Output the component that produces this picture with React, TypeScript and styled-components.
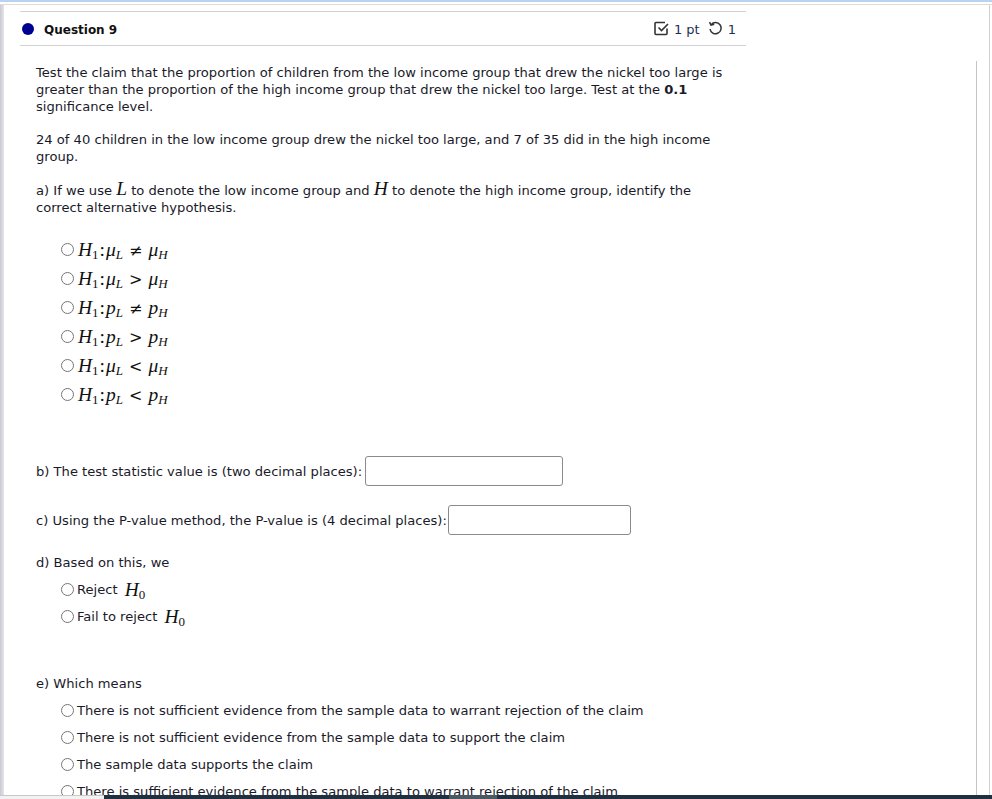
import React, { FC } from "react";
import styled, { createGlobalStyle } from "styled-components";

const GlobalStyle = createGlobalStyle`
  html, body {
    margin: 0;
    padding: 0;
    height: 100%;
    overflow: hidden;
    background: #fff;
  }
`;

const Page = styled.div`
  position: relative;
  width: 992px;
  height: 799px;
  overflow: hidden;
  font-family: "DejaVu Sans", Verdana, sans-serif;
  font-size: 13.1px;
  color: #1a1a2a;
  background: #fff;
  display: flex;
  flex-direction: column;
`;

const TopBar = styled.div`
  height: 2px;
  flex: none;
  background: #fff;
  border-top: 2px solid #b8d4f0;
  border-bottom: 1px solid #dcdcdc;
`;

const Frame = styled.div`
  flex: 1;
  display: flex;
  min-height: 0;
`;

const LeftEdge = styled.div`
  width: 4px;
  flex: none;
  background: linear-gradient(to right, #c9c9d2, #e4e4e8);
`;

const RightEdge = styled.div`
  width: 1px;
  flex: none;
  margin-left: auto;
  margin-right: 2px;
  background: #d0d0d0;
`;

const Column = styled.div`
  width: 726px;
  flex: none;
  margin-left: 16px;
  padding-top: 6px;
`;

const Header = styled.div`
  display: flex;
  align-items: center;
  height: 33px;
  border-top: 1px solid #d2d2d2;
  border-bottom: 1px solid #d2d2d2;
`;

const Dot = styled.span`
  width: 12px;
  height: 12px;
  border-radius: 50%;
  background: #000090;
  margin-left: 2px;
  margin-right: 10px;
`;

const QuestionTitle = styled.span`
  font-weight: bold;
  font-size: 12px;
  color: #111;
  padding-top: 2px;
`;

const Points = styled.div`
  margin-left: auto;
  display: flex;
  align-items: center;
  color: #1f2f50;
  font-size: 13px;
  padding-right: 10px;
`;

const PointText = styled.span<{ $gap: number }>`
  margin-left: 5px;
  margin-right: ${({ $gap }) => $gap}px;
  padding-top: 2px;
`;

const Body = styled.div`
  padding: 18px 0 0 16px;
  line-height: 17px;
`;

const Paragraph = styled.p<{ $bottom: number }>`
  margin: 0 0 ${({ $bottom }) => $bottom}px;
  width: 700px;
`;

const OptionList = styled.div<{ $top: number; $bottom: number }>`
  display: flex;
  flex-direction: column;
  margin: ${({ $top }) => $top}px 0 ${({ $bottom }) => $bottom}px 25px;
`;

const Option = styled.div`
  height: 29px;
  display: flex;
  align-items: center;
`;

const OptionTight = styled(Option)`
  height: 27px;
`;

const Radio = styled.span`
  width: 13px;
  height: 13px;
  box-sizing: border-box;
  flex: none;
  border: 1px solid #767676;
  border-radius: 50%;
  margin-right: 3px;
  background: #fff;
`;

const HypothesisGap = styled.span`
  width: 1px;
  flex: none;
`;

const Math = styled.span`
  font-family: "Liberation Serif", "Times New Roman", serif;
  font-size: 19.5px;
  font-style: italic;
  color: #111;
  white-space: pre;
`;

const InlineMath = styled(Math)`
  line-height: 0;
`;

const AfterWord = styled(Math)`
  margin-left: 3px;
`;

const Sub = styled.sub`
  font-size: 13px;
  line-height: 0;
  vertical-align: -3px;
`;

const Upright = styled.span`
  font-style: normal;
`;

const Colon = styled(Upright)`
  margin: 0 1px;
`;

const Relation = styled.span`
  font-family: "DejaVu Serif", serif;
  font-style: normal;
  font-size: 16px;
  margin: 0 6px;
`;

const AnswerRow = styled.div<{ $bottom: number; $gap: number }>`
  display: flex;
  align-items: center;
  gap: ${({ $gap }) => $gap}px;
  height: 30px;
  margin-bottom: ${({ $bottom }) => $bottom}px;
`;

const AnswerInput = styled.input<{ $width: number }>`
  width: ${({ $width }) => $width}px;
  height: 30px;
  box-sizing: border-box;
  border: 1px solid #8a8a8a;
  border-radius: 3px;
  background: #fff;
  padding: 0 4px;
`;

const Label = styled.div`
  height: 17px;
`;

const ScrollTrack = styled.div`
  position: absolute;
  left: 104px;
  right: 0;
  bottom: 0;
  height: 4px;
  background: #1f3040;
`;

const ScrollThumb = styled.div`
  position: absolute;
  left: 345px;
  top: 0;
  width: 48px;
  height: 4px;
  background: #4a5a62;
`;

const ScrollLeft = styled.div`
  position: absolute;
  left: 0;
  width: 104px;
  bottom: 0;
  height: 3px;
  background: #f2f2f2;
  border-top: 1px solid #c8c8c8;
`;

const Divider = styled.div`
  position: absolute;
  left: 976px;
  top: 61px;
  bottom: 0;
  width: 1px;
  background: #c4c4c4;
`;

const Hyp: FC<{ a: string; rel: string }> = ({ a, rel }) => (
  <Math>
    H<Sub><Upright>1</Upright></Sub><Colon>:</Colon>
    {a}<Sub>L</Sub>
    <Relation>{rel}</Relation>
    {a}<Sub>H</Sub>
  </Math>
);

const hypotheses: { a: string; rel: string }[] = [
  { a: "μ", rel: "≠" },
  { a: "μ", rel: ">" },
  { a: "p", rel: "≠" },
  { a: "p", rel: ">" },
  { a: "μ", rel: "<" },
  { a: "p", rel: "<" },
];

const conclusions = [
  "There is not sufficient evidence from the sample data to warrant rejection of the claim",
  "There is not sufficient evidence from the sample data to support the claim",
  "The sample data supports the claim",
  "There is sufficient evidence from the sample data to warrant rejection of the claim",
];

const CheckIcon = () => (
  <svg width="15" height="15" viewBox="0 0 15 15" fill="none" stroke="#333" strokeWidth="1.6">
    <path d="M13 7.5v5a1 1 0 0 1-1 1H2a1 1 0 0 1-1-1V2.5a1 1 0 0 1 1-1h9" />
    <path d="M4.5 6.5 7.5 9.5 14 3" />
  </svg>
);

const RetryIcon = () => (
  <svg width="15" height="15" viewBox="0 0 15 15" fill="none" stroke="#333" strokeWidth="1.5">
    <path d="M3.2 3.6A5.6 5.6 0 1 1 2 8" />
    <path d="M1.5 1.2 3 4.2 6.2 3.2" />
  </svg>
);

const App: FC = () => (
  <Page>
    <GlobalStyle />
    <TopBar />
    <Frame>
      <LeftEdge />
      <Column>
        <Header>
          <Dot />
          <QuestionTitle>Question 9</QuestionTitle>
          <Points>
            <CheckIcon />
            <PointText $gap={8}>1 pt</PointText>
            <RetryIcon />
            <PointText $gap={0}>1</PointText>
          </Points>
        </Header>
        <Body>
          <Paragraph $bottom={16}>
            Test the claim that the proportion of children from the low income group that drew the nickel too large is
            greater than the proportion of the high income group that drew the nickel too large. Test at the{" "}
            <b>0.1</b> significance level.
          </Paragraph>
          <Paragraph $bottom={17}>
            24 of 40 children in the low income group drew the nickel too large, and 7 of 35 did in the high income
            group.
          </Paragraph>
          <Paragraph $bottom={16}>
            a) If we use <InlineMath>L</InlineMath> to denote the low income group and <InlineMath>H</InlineMath> to
            denote the high income group, identify the correct alternative hypothesis.
          </Paragraph>
          <OptionList $top={19} $bottom={47}>
            {hypotheses.map((h) => (
              <Option key={h.a + h.rel}>
                <Radio />
                <HypothesisGap />
                <Hyp a={h.a} rel={h.rel} />
              </Option>
            ))}
          </OptionList>
          <AnswerRow $bottom={19} $gap={3}>
            b) The test statistic value is (two decimal places):
            <AnswerInput $width={198} />
          </AnswerRow>
          <AnswerRow $bottom={19} $gap={1}>
            c) Using the P-value method, the P-value is (4 decimal places):
            <AnswerInput $width={183} />
          </AnswerRow>
          <Label>d) Based on this, we</Label>
          <OptionList $top={5} $bottom={45}>
            <OptionTight>
              <Radio />
              Reject&nbsp;<AfterWord>H<Sub><Upright>0</Upright></Sub></AfterWord>
            </OptionTight>
            <OptionTight>
              <Radio />
              Fail to reject&nbsp;<AfterWord>H<Sub><Upright>0</Upright></Sub></AfterWord>
            </OptionTight>
          </OptionList>
          <Label>e) Which means</Label>
          <OptionList $top={5} $bottom={0}>
            {conclusions.map((c) => (
              <OptionTight key={c}>
                <Radio />
                {c}
              </OptionTight>
            ))}
          </OptionList>
        </Body>
      </Column>
      <RightEdge />
    </Frame>
    <Divider />
    <ScrollLeft />
    <ScrollTrack>
      <ScrollThumb />
    </ScrollTrack>
  </Page>
);

export default App;
